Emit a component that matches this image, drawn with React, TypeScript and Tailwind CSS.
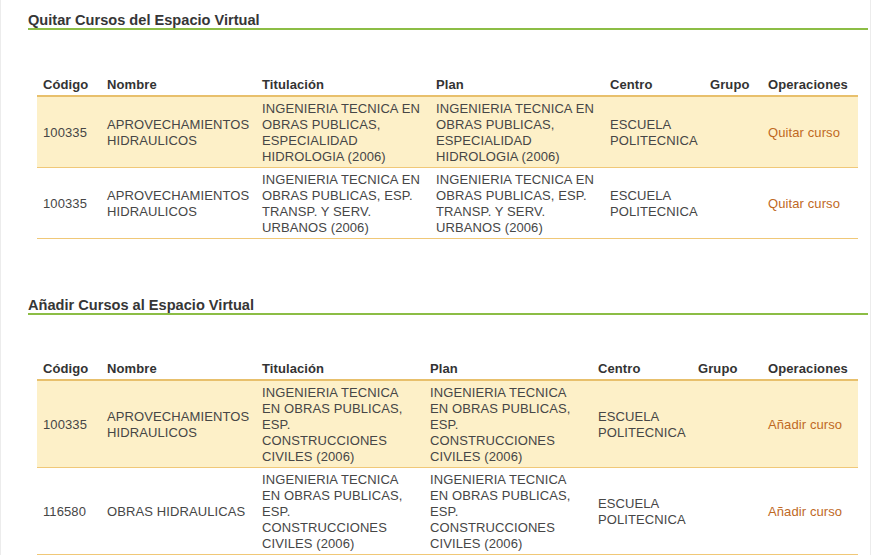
import React from "react";

type Row = {
  codigo: string;
  nombre: string;
  titulacion: string;
  plan: string;
  centro: string;
  grupo: string;
  op: string;
};

const quitar: Row[] = [
  {
    codigo: "100335",
    nombre: "APROVECHAMIENTOS HIDRAULICOS",
    titulacion: "INGENIERIA TECNICA EN OBRAS PUBLICAS, ESPECIALIDAD HIDROLOGIA (2006)",
    plan: "INGENIERIA TECNICA EN OBRAS PUBLICAS, ESPECIALIDAD HIDROLOGIA (2006)",
    centro: "ESCUELA POLITECNICA",
    grupo: "",
    op: "Quitar curso",
  },
  {
    codigo: "100335",
    nombre: "APROVECHAMIENTOS HIDRAULICOS",
    titulacion: "INGENIERIA TECNICA EN OBRAS PUBLICAS, ESP. TRANSP. Y SERV. URBANOS (2006)",
    plan: "INGENIERIA TECNICA EN OBRAS PUBLICAS, ESP. TRANSP. Y SERV. URBANOS (2006)",
    centro: "ESCUELA POLITECNICA",
    grupo: "",
    op: "Quitar curso",
  },
];

const anadir: Row[] = [
  {
    codigo: "100335",
    nombre: "APROVECHAMIENTOS HIDRAULICOS",
    titulacion: "INGENIERIA TECNICA EN OBRAS PUBLICAS, ESP. CONSTRUCCIONES CIVILES (2006)",
    plan: "INGENIERIA TECNICA EN OBRAS PUBLICAS, ESP. CONSTRUCCIONES CIVILES (2006)",
    centro: "ESCUELA POLITECNICA",
    grupo: "",
    op: "Añadir curso",
  },
  {
    codigo: "116580",
    nombre: "OBRAS HIDRAULICAS",
    titulacion: "INGENIERIA TECNICA EN OBRAS PUBLICAS, ESP. CONSTRUCCIONES CIVILES (2006)",
    plan: "INGENIERIA TECNICA EN OBRAS PUBLICAS, ESP. CONSTRUCCIONES CIVILES (2006)",
    centro: "ESCUELA POLITECNICA",
    grupo: "",
    op: "Añadir curso",
  },
];

function CourseTable({ rows, widths }: { rows: Row[]; widths: number[] }) {
  const heads = ["Código", "Nombre", "Titulación", "Plan", "Centro", "Grupo", "Operaciones"];
  const td = "px-[6px] pt-[4px] pb-[2px] align-middle text-[#464646]";
  return (
    <table className="ml-[9px] w-[821px] table-fixed border-collapse text-[13px] leading-[16px] tracking-[0.1px]">
      <colgroup>
        {widths.map((w, i) => (
          <col key={i} style={{ width: w }} />
        ))}
      </colgroup>
      <thead>
        <tr className="border-b-2 border-[#e8c06c]">
          {heads.map((h) => (
            <th key={h} className="px-[6px] pt-[4px] pb-[2px] text-left font-bold text-[#333333] whitespace-nowrap">
              {h}
            </th>
          ))}
        </tr>
      </thead>
      <tbody>
        {rows.map((r, i) => (
          <tr key={i} className={`border-b border-[#f0c878] ${i % 2 === 0 ? "bg-[#fdf0c8]" : "bg-white"}`}>
            <td className={td}>{r.codigo}</td>
            <td className={td}>{r.nombre}</td>
            <td className={td}>{r.titulacion}</td>
            <td className={td}>{r.plan}</td>
            <td className={td}>{r.centro}</td>
            <td className={td}>{r.grupo}</td>
            <td className="px-[6px] pt-[4px] pb-[2px] align-middle">
              <a className="text-[#c0691f] cursor-pointer">{r.op}</a>
            </td>
          </tr>
        ))}
      </tbody>
    </table>
  );
}

export default function App() {
  return (
    <div
      className="min-h-[555px] bg-white border-x border-[#ececec] pl-[27px] pr-[2px] pt-[12px]"
      style={{ fontFamily: '"Liberation Sans", Arial, sans-serif' }}
    >
      <h2 className="text-[14.6px] leading-[16px] font-bold text-[#363636] border-b-2 border-[#8cbd45]">
        Quitar Cursos del Espacio Virtual
      </h2>
      <div className="mt-[43px]">
        <CourseTable rows={quitar} widths={[64, 155, 174, 174, 100, 58, 96]} />
      </div>
      <h2 className="mt-[58px] text-[14.6px] leading-[16px] font-bold text-[#363636] border-b-2 border-[#8cbd45]">
        Añadir Cursos al Espacio Virtual
      </h2>
      <div className="mt-[42px]">
        <CourseTable rows={anadir} widths={[64, 155, 168, 168, 100, 70, 96]} />
      </div>
    </div>
  );
}
